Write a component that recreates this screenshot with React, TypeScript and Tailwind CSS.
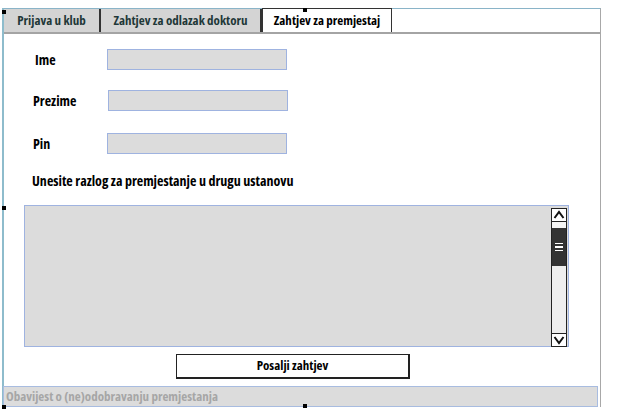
import React from "react";

const font = { fontFamily: '"Open Sans", "DejaVu Sans", sans-serif', fontStretch: "80%" };

function Handle({ className }: { className: string }) {
  return <div className={`absolute w-[4px] h-[4px] bg-black ${className}`} />;
}

export default function App() {
  return (
    <div className="w-[617px] h-[418px] bg-white relative overflow-hidden" style={font}>
      <div className="ml-[2px] mt-[8px] w-[599px] h-[399px] border-t border-t-[#8ab4c8] border-l-2 border-l-[#8ebccc] border-r border-r-[#a8a8a8] flex flex-col">
        {/* Tabs */}
        <div className="h-[25px] flex items-end border-b-2 border-[#a4a4a4] shrink-0 whitespace-nowrap">
          <div className="w-[95px] h-[23px] bg-[#d4d4d4] flex items-center justify-center text-[13px] font-bold text-[#1f3838]">
            Prijava u klub
          </div>
          <div className="w-[163px] h-[23px] bg-[#d4d4d4] border-x-2 border-[#333] flex items-center justify-center text-[13px] font-bold text-[#1f3838]">
            Zahtjev za odlazak doktoru
          </div>
          <div className="w-[130px] h-[24px] bg-white border-t border-x border-[#333] flex items-center justify-center text-[13px] font-bold text-black">
            Zahtjev za premjestaj
          </div>
        </div>

        {/* Form */}
        <div className="flex flex-col pt-[15px] whitespace-nowrap">
          <div className="flex items-center h-[21px]">
            <span className="ml-[31px] w-[72px] text-[14px] font-bold text-black">Ime</span>
            <div className="w-[180px] h-[21px] bg-[#dcdcdc] border border-[#9fb3e0]" />
          </div>
          <div className="flex items-center h-[21px] mt-[20px]">
            <span className="ml-[29px] w-[75px] text-[14px] font-bold text-black">Prezime</span>
            <div className="w-[180px] h-[21px] bg-[#dcdcdc] border border-[#9fb3e0]" />
          </div>
          <div className="flex items-center h-[21px] mt-[22px]">
            <span className="ml-[29px] w-[74px] text-[14px] font-bold text-black">Pin</span>
            <div className="w-[180px] h-[21px] bg-[#dcdcdc] border border-[#9fb3e0]" />
          </div>
          <div className="ml-[28px] mt-[19px] h-[16px] leading-[16px] text-[14px] font-bold text-black">
            Unesite razlog za premjestanje u drugu ustanovu
          </div>

          {/* Textarea */}
          <div className="ml-[20px] mt-[16px] w-[545px] h-[142px] bg-[#dcdcdc] border border-[#9fb3e0] flex justify-end pt-[2px]">
            <div className="w-[16px] h-[139px] mr-[1px] flex flex-col border-x border-[#222] bg-[#eeeeee]">
              <div className="h-[14px] border border-[#222] -mx-px bg-white flex items-center justify-center">
                <svg width="12" height="10" viewBox="0 0 12 10"><path d="M1.5 8 L6 2 L10.5 8" fill="none" stroke="#111" strokeWidth="2" /></svg>
              </div>
              <div className="h-[6px] bg-[#f4f4f4]" />
              <div className="h-[38px] bg-[#333] flex flex-col items-center justify-center gap-[2px]">
                <div className="w-[8px] h-[1.5px] bg-white" />
                <div className="w-[8px] h-[1.5px] bg-white" />
                <div className="w-[8px] h-[1.5px] bg-white" />
              </div>
              <div className="flex-1 bg-[#eeeeee]" />
              <div className="h-[14px] border border-[#222] -mx-px bg-white flex items-center justify-center">
                <svg width="12" height="10" viewBox="0 0 12 10"><path d="M1.5 2 L6 8 L10.5 2" fill="none" stroke="#111" strokeWidth="2" /></svg>
              </div>
            </div>
          </div>

          {/* Button */}
          <div className="ml-[172px] mt-[7px] w-[234px] h-[25px] bg-white border border-[#222] border-r-2 border-b-2 flex items-center justify-center text-[13px] font-bold text-black">
            Posalji zahtjev
          </div>

          {/* Status */}
          <div className="-ml-[1px] mt-[7px] w-[595px] h-[21px] bg-[#dcdcdc] border border-[#a8bce0] flex items-center pl-[2px] text-[13px] font-bold text-[#a6a6a6]">
            Obavijest o (ne)odobravanju premjestanja
          </div>
        </div>
      </div>

      <Handle className="left-[2px] top-[10px]" />
      <Handle className="left-[303px] top-[8px]" />
      <Handle className="left-[2px] top-[206px]" />
      <Handle className="left-[303px] top-[404px] h-[2px]" />
      <Handle className="left-[2px] top-[405px] h-[2px]" />
    </div>
  );
}
